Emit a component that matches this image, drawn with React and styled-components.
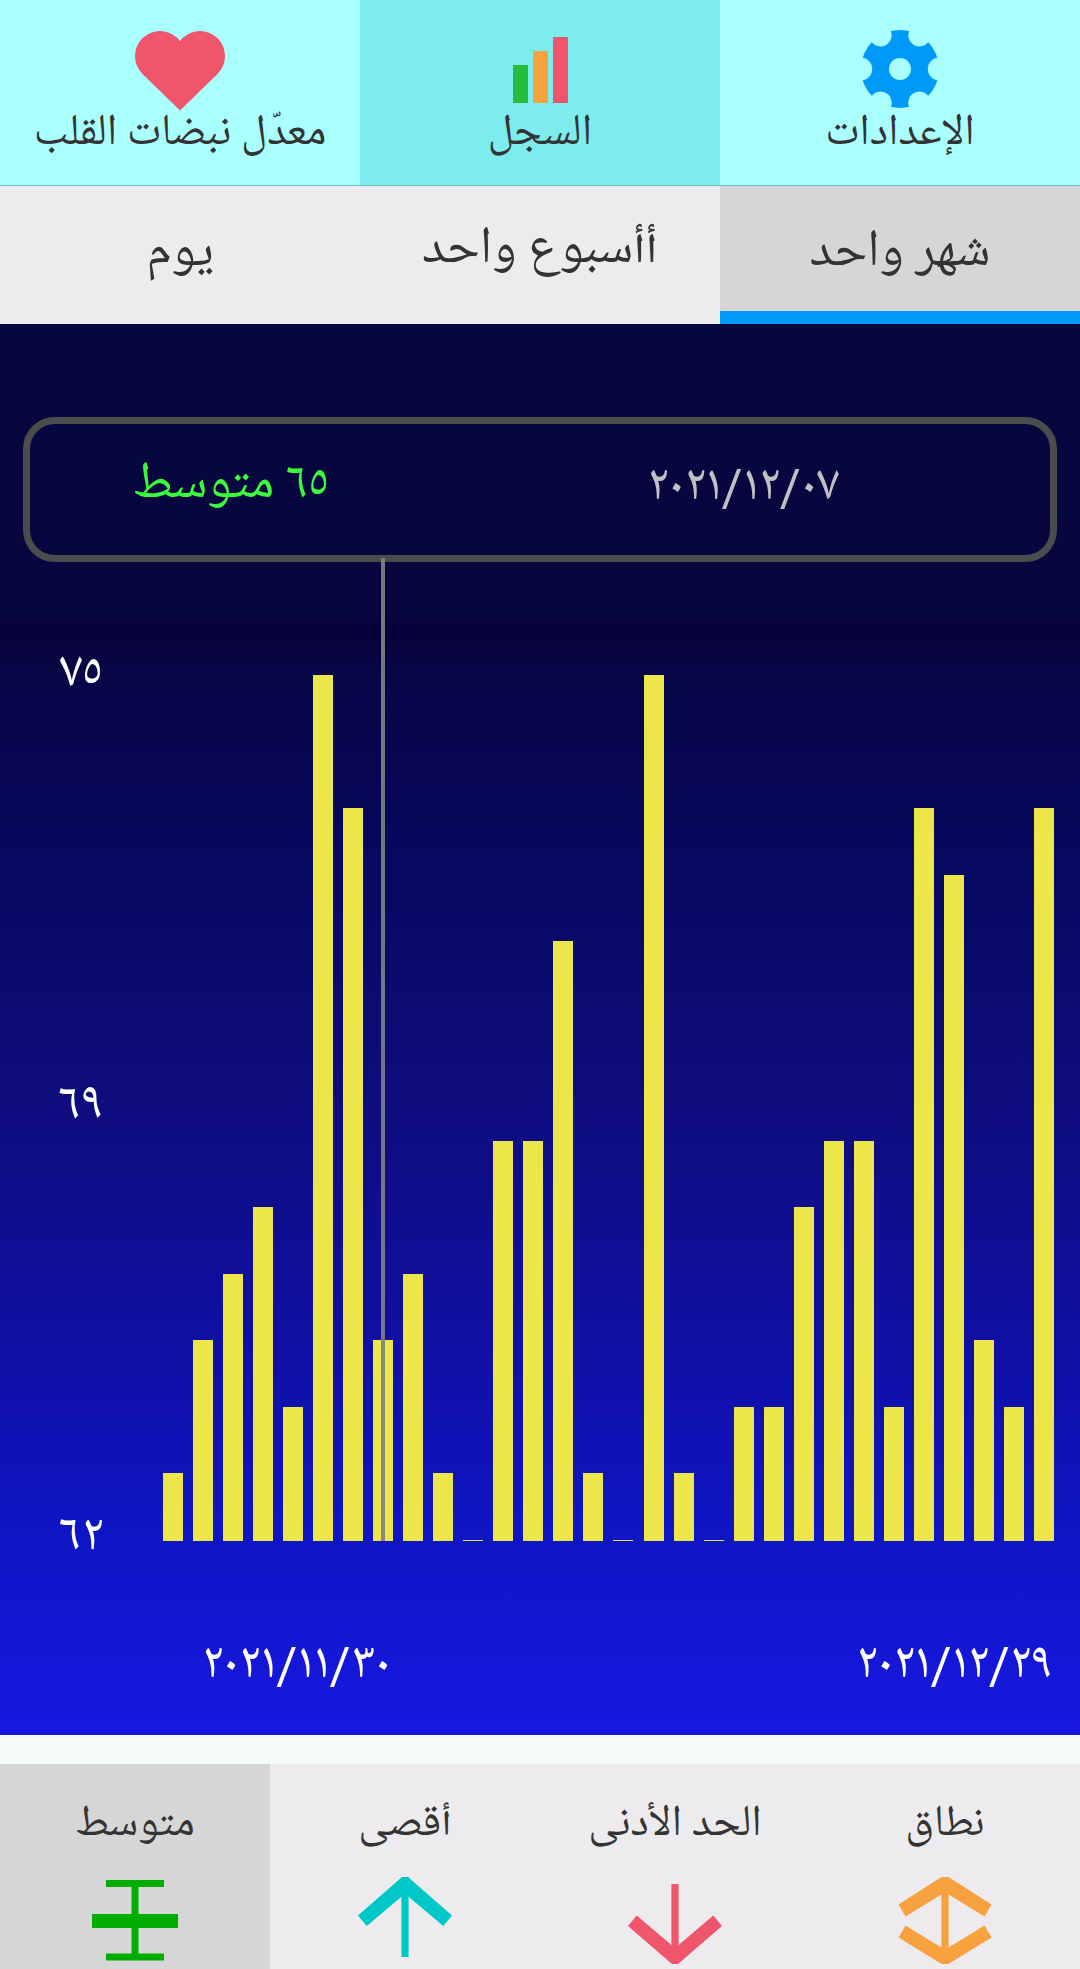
import React from 'react';
import styled, { createGlobalStyle } from 'styled-components';

const GlobalStyle = createGlobalStyle`
  body {
    margin: 0;
    background: #f5fbf8;
    font-family: "Noto Naskh Arabic UI", "Noto Naskh Arabic", Roboto, "DejaVu Sans", sans-serif;
    color: #333333;
  }
`;

const Screen = styled.div`
  width: 1080px;
  height: 1969px;
  overflow: hidden;
  display: flex;
  flex-direction: column;
`;

const Header = styled.div`
  height: 185px;
  display: flex;
  flex-direction: row-reverse;
  border-bottom: 1px solid #6fc3c6;
`;
const HeaderItem = styled.div`
  flex: 1;
  padding-top: 24px;
  display: flex;
  flex-direction: column;
  align-items: center;
  background-color: ${p => (p.$active ? '#7cecec' : '#aaffff')};

  svg {
    display: block;
  }
`;
const HeaderLabel = styled.div`
  margin-top: -9px;
  direction: rtl;
  font-size: 44px;
  line-height: 60px;
  white-space: nowrap;
`;

const Tabs = styled.div`
  height: 138px;
  display: flex;
  flex-direction: row-reverse;
  background-color: #edebed;
`;
const Tab = styled.div`
  flex: 1;
  box-sizing: border-box;
  padding-top: ${p => p.$top}px;
  direction: rtl;
  text-align: center;
  font-size: 52px;
  line-height: 60px;
  ${p => p.$active && `
    background-color: #d6d6d6;
    border-bottom: 13px solid #0099f8;
  `}
`;

const Panel = styled.div`
  height: 1411px;
  box-sizing: border-box;
  padding-top: 93px;
  color: #ffffff;
  background: linear-gradient(
    #07073f 0,
    #07063e 286px,
    #070239 312px,
    #070646 345px,
    #07085f 534px,
    #0f0d80 795px,
    #1010a8 1046px,
    #0e16c8 1233px,
    #1818df 1405px
  );
`;
const Summary = styled.div`
  margin: 0 23px;
  height: 145px;
  box-sizing: border-box;
  border: 7px solid #4b4d4d;
  border-radius: 32px;
  display: flex;
  direction: rtl;
  font-size: 52px;
  line-height: 60px;
`;
const SummaryCell = styled.div`
  flex: 1;
  box-sizing: border-box;
  padding: ${p => p.$pad};
  text-align: center;
  white-space: nowrap;
  color: ${p => p.$color};
`;

const Chart = styled.div`
  height: 979px;
  display: flex;
`;
const Axis = styled.div`
  width: 163px;
  height: 923px;
  padding-top: 81px;
  flex: none;
  display: flex;
  flex-direction: column;
  justify-content: space-between;
`;
const Tick = styled.div`
  width: 162px;
  text-align: center;
  font-size: 52px;
  line-height: 60px;
`;
const Plot = styled.div`
  width: 891px;
  display: flex;
  align-items: flex-end;
  justify-content: space-between;
`;
const Bar = styled.div`
  position: relative;
  width: 20px;
  height: ${p => p.$value * 66.5 + 1.5}px;
  background-color: #ece64a;
`;
const Marker = styled.div`
  position: absolute;
  left: 8px;
  bottom: 0;
  width: 4px;
  height: 983px;
  background-color: rgba(128, 128, 128, 0.92);
`;
const Dates = styled.div`
  padding: 96px 27px 0 202px;
  display: flex;
  justify-content: space-between;
  line-height: 60px;
`;
// Roboto first, so the slashes come from it and only the digits fall back
const DateText = styled.span`
  font-family: Roboto, "Noto Naskh Arabic UI", "Noto Naskh Arabic", "DejaVu Sans", sans-serif;
  font-size: 51px;
`;

const Footer = styled.div`
  margin-top: 29px;
  height: 205px;
  display: flex;
  flex-direction: row-reverse;
  background-color: #edebed;
`;
const FooterItem = styled.div`
  flex: 1;
  padding-top: 30px;
  display: flex;
  flex-direction: column;
  align-items: center;
  background-color: ${p => (p.$active ? '#d6d6d6' : 'transparent')};

  svg {
    display: block;
    margin-top: 21px;
  }
`;
const FooterLabel = styled.div`
  direction: rtl;
  font-size: 44px;
  line-height: 60px;
  white-space: nowrap;
`;

const HeartIcon = () => (
  <svg width="92" height="88" viewBox="134 24 92 88" fill="#ef566b">
    <circle cx="160" cy="56" r="25" />
    <circle cx="200" cy="56" r="25" />
    <path d="M142.5 74L160 50L180 41L200 50L217.5 74L180 110.5Z" />
  </svg>
);

const HistoryIcon = () => (
  <svg width="92" height="88" viewBox="494 24 92 88">
    <rect x="513" y="65" width="15" height="38" fill="#24bd3f" />
    <rect x="533" y="51" width="15" height="52" fill="#f8a13f" />
    <rect x="553" y="37" width="15" height="66" fill="#ef566b" />
  </svg>
);

const GearIcon = () => (
  <svg width="92" height="88" viewBox="854 24 92 88">
    <mask id="gear">
      <circle cx="900" cy="69" r="39" fill="#fff" />
      <circle cx="900" cy="69" r="11" fill="#000" />
      {[0, 60, 120, 180, 240, 300].map(a => (
        <circle key={a} cx="939" cy="69" r="11.2" fill="#000" transform={`rotate(${a} 900 69)`} />
      ))}
    </mask>
    <rect x="854" y="24" width="92" height="88" fill="#0099f8" mask="url(#gear)" />
  </svg>
);

const AverageIcon = () => (
  <svg width="96" height="92" viewBox="87 1875 96 92" fill="#00ad00">
    <rect x="106" y="1880" width="58" height="7" />
    <rect x="131.5" y="1884" width="7" height="73" />
    <rect x="92" y="1914" width="86" height="14" />
    <rect x="106" y="1953.5" width="58" height="7" />
  </svg>
);

const MaxIcon = () => (
  <svg width="96" height="92" viewBox="357 1875 96 92" fill="#00c8c8">
    <path d="M402 1877H408L452 1915.5L443.3 1926L408.6 1896.7V1957H401.4V1896.7L366.7 1926L358 1915.5Z" />
  </svg>
);

const MinIcon = () => (
  <svg width="96" height="92" viewBox="627 1875 96 92" fill="#ef566b">
    <path d="M672 1964H678L722 1926L713.3 1915.5L678.6 1945V1884H671.4V1945L636.7 1915.5L628 1926Z" />
  </svg>
);

const RangeIcon = () => (
  <svg width="96" height="92" viewBox="897 1875 96 92" fill="#f8a13f">
    <path d="M941.5 1877H948.5L991.5 1904.5L984.5 1916.5L948.6 1894.5V1947.5L984.5 1925.5L991.5 1937.5L948.5 1964H941.5L898.5 1937.5L905.5 1925.5L941.4 1947.5V1894.5L905.5 1916.5L898.5 1904.5Z" />
  </svg>
);

// beats above the lowest tick, one entry per day
const days = [
  1, 3, 4, 5, 2, 13, 11, 3, 4, 1, 0, 6, 6, 9, 1,
  0, 13, 1, 0, 2, 2, 5, 6, 6, 2, 11, 10, 3, 2, 11,
];
const selected = 7;

const App = () => (
  <Screen>
    <GlobalStyle />
    <Header>
      <HeaderItem>
        <GearIcon />
        <HeaderLabel>الإعدادات</HeaderLabel>
      </HeaderItem>
      <HeaderItem $active>
        <HistoryIcon />
        <HeaderLabel>السجل</HeaderLabel>
      </HeaderItem>
      <HeaderItem>
        <HeartIcon />
        <HeaderLabel>معدّل نبضات القلب</HeaderLabel>
      </HeaderItem>
    </Header>
    <Tabs>
      <Tab $top={36} $active>شهر واحد</Tab>
      <Tab $top={33}>أأسبوع واحد</Tab>
      <Tab $top={36}>يوم</Tab>
    </Tabs>
    <Panel>
      <Summary>
        <SummaryCell $pad="32px 106px 0 0" $color="#c0c0c4">
          <DateText>٢٠٢١/١٢/٠٧</DateText>
        </SummaryCell>
        <SummaryCell $pad="30px 111px 0 0" $color="#3cfa3c">٦٥ متوسط</SummaryCell>
      </Summary>
      <Chart>
        <Axis>
          <Tick>٧٥</Tick>
          <Tick>٦٩</Tick>
          <Tick>٦٢</Tick>
        </Axis>
        <Plot>
          {days.map((value, i) => (
            <Bar key={i} $value={value}>{i === selected && <Marker />}</Bar>
          ))}
        </Plot>
      </Chart>
      <Dates>
        <DateText>٢٠٢١/١١/٣٠</DateText>
        <DateText>٢٠٢١/١٢/٢٩</DateText>
      </Dates>
    </Panel>
    <Footer>
      <FooterItem>
        <FooterLabel>نطاق</FooterLabel>
        <RangeIcon />
      </FooterItem>
      <FooterItem>
        <FooterLabel>الحد الأدنى</FooterLabel>
        <MinIcon />
      </FooterItem>
      <FooterItem>
        <FooterLabel>أقصى</FooterLabel>
        <MaxIcon />
      </FooterItem>
      <FooterItem $active>
        <FooterLabel>متوسط</FooterLabel>
        <AverageIcon />
      </FooterItem>
    </Footer>
  </Screen>
);

export default App;
